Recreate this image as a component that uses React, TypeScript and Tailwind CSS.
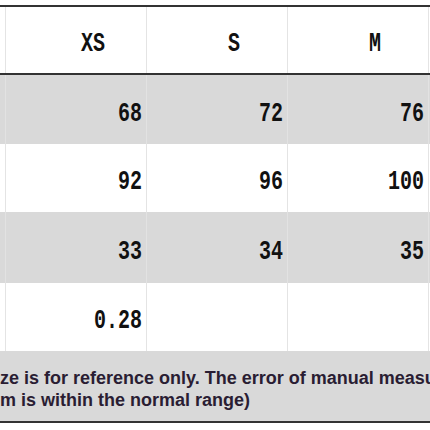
import React from "react";

const rows = [
  { cells: ["68", "72", "76"], gray: true, h: "h-[69px]" },
  { cells: ["92", "96", "100"], gray: false, h: "h-[68px]" },
  { cells: ["33", "34", "35"], gray: true, h: "h-[71px]" },
  { cells: ["0.28", "", ""], gray: false, h: "h-[68px]" },
];

const Num = ({ children }: { children: React.ReactNode }) => (
  <span className="inline-block origin-center scale-y-[1.4] font-['Liberation_Mono',monospace] text-[20px] font-bold leading-none text-[#111]">
    {children}
  </span>
);

const App = () => {
  return (
    <div className="h-[430px] w-[430px] overflow-hidden bg-white pt-[5px]">
      <div className="border-t-2 border-[#333]">
        {/* header */}
        <div className="grid h-[68px] grid-cols-[5px_141px_141px_141px_1fr] border-b-2 border-[#333]">
          <div />
          {["XS", "S", "M"].map((s) => (
            <div
              key={s}
              className="flex items-center justify-center border-l border-[#e4e4e4] pl-[34px] pt-[8px]"
            >
              <Num>{s}</Num>
            </div>
          ))}
          <div className="border-l border-[#e4e4e4]" />
        </div>

        {rows.map((row, i) => (
          <div
            key={i}
            className={`grid grid-cols-[5px_141px_141px_141px_1fr] ${row.h} ${
              row.gray ? "bg-[#d9d9d9]" : "bg-white"
            }`}
          >
            <div />
            {row.cells.map((c, j) => (
              <div
                key={j}
                className={`flex items-center justify-end border-l pr-[4px] pt-[8px] ${
                  row.gray ? "border-[#e2e2e2]" : "border-[#e4e4e4]"
                }`}
              >
                <Num>{c}</Num>
              </div>
            ))}
            <div
              className={`border-l ${
                row.gray ? "border-[#e2e2e2]" : "border-[#e4e4e4]"
              }`}
            />
          </div>
        ))}

        {/* note */}
        <div className="flex h-[72px] flex-col justify-center overflow-hidden border-b-2 border-[#333] bg-[#d9d9d9] pt-[6px] font-['Liberation_Sans',sans-serif] text-[18px] font-bold leading-[22px] text-[#2a1d33]">
          <p className="whitespace-nowrap">
            ze is for reference only. The error of manual measu
          </p>
          <p className="whitespace-nowrap">m is within the normal range)</p>
        </div>
      </div>
    </div>
  );
};

export default App;
